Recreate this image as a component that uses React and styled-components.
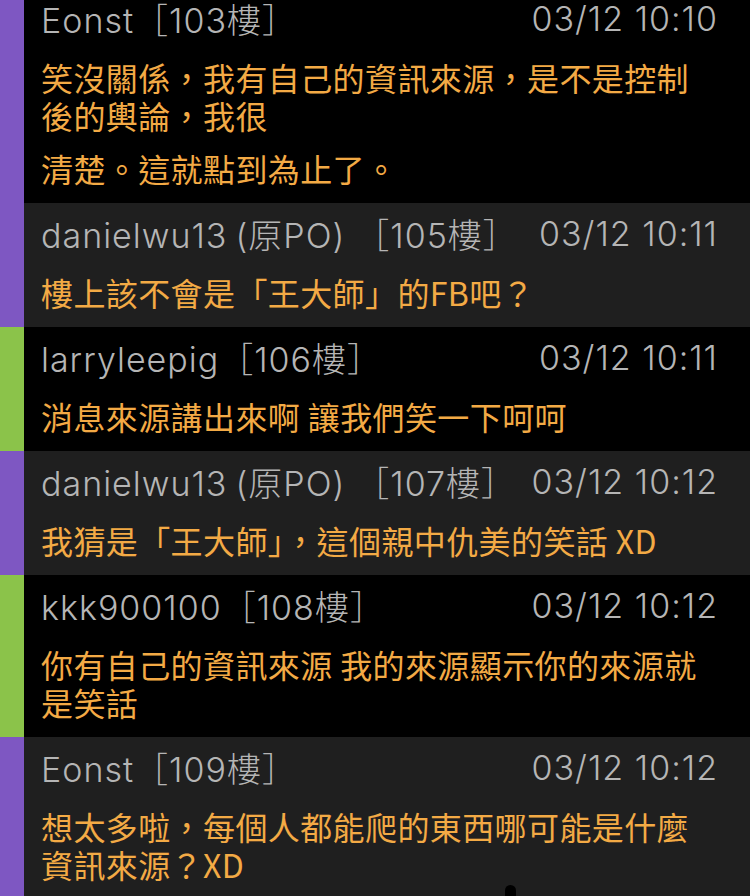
import React from "react";
import styled, { createGlobalStyle } from "styled-components";

const colors = {
  purple: "#7e57c2",
  green: "#8bc34a",
  dark: "#000000",
  gray: "#1f1f1f",
  meta: "#b5b5b5",
  text: "#f3aa45",
};

const floors = [
  {
    id: 103,
    user: "Eonst",
    time: "03/12 10:10",
    bar: "purple",
    shade: "dark",
    lines: ["笑沒關係，我有自己的資訊來源，是不是控制後的輿論，我很", "清楚。這就點到為止了。"],
  },
  {
    id: 105,
    user: "danielwu13",
    op: true,
    time: "03/12 10:11",
    bar: "purple",
    shade: "gray",
    lines: ["樓上該不會是「王大師」的FB吧？"],
  },
  {
    id: 106,
    user: "larryleepig",
    time: "03/12 10:11",
    bar: "green",
    shade: "dark",
    lines: ["消息來源講出來啊 讓我們笑一下呵呵"],
  },
  {
    id: 107,
    user: "danielwu13",
    op: true,
    time: "03/12 10:12",
    bar: "purple",
    shade: "gray",
    lines: ["我猜是「王大師」，這個親中仇美的笑話 XD"],
  },
  {
    id: 108,
    user: "kkk900100",
    time: "03/12 10:12",
    bar: "green",
    shade: "dark",
    lines: ["你有自己的資訊來源 我的來源顯示你的來源就是笑話"],
  },
  {
    id: 109,
    user: "Eonst",
    time: "03/12 10:12",
    bar: "purple",
    shade: "gray",
    lines: ["想太多啦，每個人都能爬的東西哪可能是什麼資訊來源？XD"],
    cursor: true,
  },
];

const GlobalStyle = createGlobalStyle`
  body {
    margin: 0;
    background: #000;
    overflow: hidden;
  }
`;

const Screen = styled.div`
  width: 750px;
  height: 896px;
  overflow: hidden;
  background: #000;
`;

// list is scrolled a little, so the first floor's top is hidden
const List = styled.div`
  display: flex;
  flex-direction: column;
  margin-top: -12px;
`;

const Floor = styled.div`
  position: relative;
  display: flex;
  background: ${(p) => colors[p.$shade]};
`;

const Bar = styled.div`
  width: 24px;
  flex-shrink: 0;
  background: ${(p) => colors[p.$color]};
`;

const Body = styled.div`
  flex: 1;
  padding: 10px 32px 16px 17px;
`;

const Header = styled.div`
  display: flex;
  justify-content: space-between;
  align-items: center;
  height: 40px;
  font-family: Inter, "Noto Sans CJK TC", sans-serif;
  font-size: 34px;
  font-weight: 300;
  color: ${colors.meta};
  white-space: nowrap;
`;

const Author = styled.span`
  letter-spacing: 1px;
`;

const Op = styled.span`
  margin: 0 10px 0 8px;
`;

const Time = styled.span`
  letter-spacing: 1px;
`;

const Content = styled.p`
  margin: 20px 18px 0 0;
  font-family: "Noto Sans CJK TC", sans-serif;
  font-size: 32px;
  letter-spacing: 0.4px;
  line-height: 38px;
  color: ${colors.text};

  & + & {
    margin-top: 15px;
  }
`;

const Caret = styled.div`
  position: absolute;
  left: 505px;
  bottom: -4px;
  width: 11px;
  height: 18px;
  border-radius: 6px 6px 0 0;
  background: #000;
`;

const App = () => {
  return (
    <Screen>
      <GlobalStyle />
      <List>
        {floors.map((f) => (
          <Floor key={f.id} $shade={f.shade}>
            <Bar $color={f.bar} />
            <Body>
              <Header>
                <Author>
                  {f.user}
                  {f.op && <Op>(原PO)</Op>}［{f.id}樓］
                </Author>
                <Time>{f.time}</Time>
              </Header>
              {f.lines.map((l, i) => (
                <Content key={i}>{l}</Content>
              ))}
            </Body>
            {f.cursor && <Caret />}
          </Floor>
        ))}
      </List>
    </Screen>
  );
};

export default App;
